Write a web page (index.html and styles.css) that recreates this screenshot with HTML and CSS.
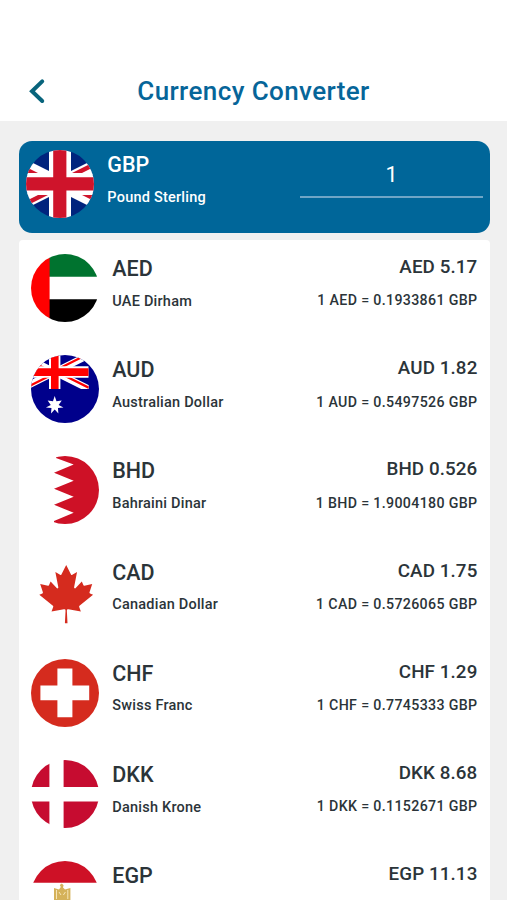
FILE: index.html
```html
<!DOCTYPE html>
<html lang="en">
<head>
  <meta charset="UTF-8">
  <meta name="viewport" content="width=device-width, initial-scale=1.0">
  <title>Currency Converter</title>
  <link rel="stylesheet" href="styles.css">
</head>
<body>
  <header class="header">
    <svg class="back" viewBox="0 0 18 26"><path d="M14.2 3.4 4 13.2 14.2 23" /></svg>
    <h1>Currency Converter</h1>
  </header>

  <main class="content">
    <section class="base">
      <svg class="flag" viewBox="0 0 68 68">
        <clipPath id="circle"><circle cx="34" cy="34" r="34" /></clipPath>
        <g clip-path="url(#circle)">
          <path fill="#00247d" d="M0 0h68v68H0z" />
          <path stroke="#fff" stroke-width="13.6" d="M-34 0 102 68M-34 68 102 0" />
          <path stroke="#cf142b" stroke-width="4.4" d="M-34 2.5 34 36.5M34 31.5l68 34M-34 70.5l68-34M34 31.5l68-34" />
          <path fill="#fff" d="M23 0h22v68H23zM0 23h68v22H0z" />
          <path fill="#cf142b" d="M27.2 0h13.2v68H27.2zM0 27.2h68v13.4H0z" />
        </g>
      </svg>
      <div class="name">
        <h2>GBP</h2>
        <p>Pound Sterling</p>
      </div>
      <div class="amount">1</div>
    </section>

    <section class="list">
      <div class="row">
        <svg class="flag" viewBox="0 0 68 68">
          <g clip-path="url(#circle)">
            <path fill="#00732f" d="M18 0h50v22.7H18z" />
            <path d="M18 45.3h50V68H18z" />
            <path fill="#f00" d="M0 0h18.6v68H0z" />
          </g>
        </svg>
        <div class="name">
          <h2>AED</h2>
          <p>UAE Dirham</p>
        </div>
        <div class="rate">
          <h2>AED 5.17</h2>
          <p>1 AED = 0.1933861 GBP</p>
        </div>
      </div>

      <div class="row">
        <svg class="flag" viewBox="0 0 68 68">
          <clipPath id="canton"><path d="M0 0h57.7v34H0z" /></clipPath>
          <g clip-path="url(#circle)">
            <path fill="#00008b" d="M0 0h68v68H0z" />
            <g clip-path="url(#canton)">
              <path stroke="#fff" stroke-width="6.8" d="M-10.3 0l68 34M-10.3 34l68-34" />
              <path stroke="#f00" stroke-width="2.2" d="M-10.3 1.3l34 17M23.7 15.7l34 17M-10.3 35.3l34-17M23.7 15.7l34-17" />
              <path fill="#fff" d="M18 0h11.4v34H18zM0 11.3h57.7v11.4H0z" />
              <path fill="#f00" d="M20 0h7.6v34H20zM0 13.2h57.7v7.8H0z" />
            </g>
            <path fill="#fff" d="M23.7 41l1.75 5.37 5.29-.98-3.11 4.61 4.84 2.51-5.54.45.46 5.54-3.69-4.1-3.69 4.1.46-5.54-5.54-.45 4.84-2.51-3.11-4.61 5.29.98z" />
          </g>
        </svg>
        <div class="name">
          <h2>AUD</h2>
          <p>Australian Dollar</p>
        </div>
        <div class="rate">
          <h2>AUD 1.82</h2>
          <p>1 AUD = 0.5497526 GBP</p>
        </div>
      </div>

      <div class="row">
        <svg class="flag" viewBox="0 0 68 68">
          <path clip-path="url(#circle)" fill="#ce1126" d="M68 0H25v2l17.7 6.6L23 16.8l19.7 8L23 32.8l19.7 8L23 48.8l19.7 8L23 65v3h45z" />
        </svg>
        <div class="name">
          <h2>BHD</h2>
          <p>Bahraini Dinar</p>
        </div>
        <div class="rate">
          <h2>BHD 0.526</h2>
          <p>1 BHD = 1.9004180 GBP</p>
        </div>
      </div>

      <div class="row">
        <svg class="flag" viewBox="0 0 68 68">
          <path fill="#d52b1e" transform="translate(35.2 35.9) scale(.01445)" d="m-90 2030 45-863a95 95 0 0 0-111-98l-859 151 116-320a65 65 0 0 0-20-73l-941-762 212-99a65 65 0 0 0 34-79l-186-572 542 115a65 65 0 0 0 73-38l105-247 423 454a65 65 0 0 0 111-57l-204-1052 327 189a65 65 0 0 0 91-27l332-652 332 652a65 65 0 0 0 91 27l327-189-204 1052a65 65 0 0 0 111 57l423-454 105 247a65 65 0 0 0 73 38l542-115-186 572a65 65 0 0 0 34 79l212 99-941 762a65 65 0 0 0-20 73l116 320-859-151a95 95 0 0 0-111 98l45 863z" />
        </svg>
        <div class="name">
          <h2>CAD</h2>
          <p>Canadian Dollar</p>
        </div>
        <div class="rate">
          <h2>CAD 1.75</h2>
          <p>1 CAD = 0.5726065 GBP</p>
        </div>
      </div>

      <div class="row">
        <svg class="flag" viewBox="0 0 68 68">
          <circle cx="34" cy="34" r="34" fill="#d52b1e" />
          <path fill="#fff" d="M26.4 9.4h15v17h16.8v14.8H41.4v17h-15v-17H9.4V26.4h17z" />
        </svg>
        <div class="name">
          <h2>CHF</h2>
          <p>Swiss Franc</p>
        </div>
        <div class="rate">
          <h2>CHF 1.29</h2>
          <p>1 CHF = 0.7745333 GBP</p>
        </div>
      </div>

      <div class="row">
        <svg class="flag" viewBox="0 0 68 68">
          <path clip-path="url(#circle)" fill="#c60c30" d="M0 0h18.4v27H0zM32.6 0H68v27H32.6zM0 41.4h18.4V68H0zM32.6 41.4H68V68H32.6z" />
        </svg>
        <div class="name">
          <h2>DKK</h2>
          <p>Danish Krone</p>
        </div>
        <div class="rate">
          <h2>DKK 8.68</h2>
          <p>1 DKK = 0.1152671 GBP</p>
        </div>
      </div>

      <div class="row">
        <svg class="flag" viewBox="0 0 68 68">
          <g clip-path="url(#circle)">
            <path fill="#ce1126" d="M0 0h68v21.8H0z" />
            <path d="M0 46h68v22H0z" />
          </g>
          <path fill="#d5b25a" d="M23 27l5 1.5 1.8-2.5-1-2 2-1.4 1.8 1.6-.6 2.2 2 2.1 5.4-1.5v15H23z" />
          <path fill="none" stroke="#fff3cf" stroke-width=".8" d="M25.5 29v9M36.8 29v9M28 31l2 3M34.4 31l-2 3" />
        </svg>
        <div class="name">
          <h2>EGP</h2>
        </div>
        <div class="rate">
          <h2>EGP 11.13</h2>
        </div>
      </div>
    </section>
  </main>
</body>
</html>
```

FILE: styles.css
```css
* {
  box-sizing: border-box;
}
body {
  margin: 0;
  height: 900px;
  overflow: hidden;
  background: #f0f0f0;
  color: #2b3439;
  font-family: Roboto, "Liberation Sans", sans-serif;
  font-weight: 500;
}
h1, h2, p {
  margin: 0;
  font-weight: 500;
  white-space: nowrap;
}
.header {
  display: grid;
  grid-template-columns: 74px 1fr 74px;
  align-items: center;
  height: 121px;
  padding-top: 61px;
  background: #fff;
}
.header h1 {
  color: #066599;
  font-size: 26px;
  line-height: 30px;
  letter-spacing: 0.4px;
  text-align: center;
}
.back {
  width: 18px;
  height: 26px;
  margin-left: 28px;
  fill: none;
  stroke: #08647c;
  stroke-width: 4;
  stroke-linecap: round;
}
.content {
  height: 779px;
  padding: 20px 17px 0 19px;
  overflow: hidden;
}
.flag {
  flex: none;
  width: 68px;
  height: 68px;
}
.base {
  display: flex;
  height: 92px;
  padding: 9px 7px;
  border-radius: 13px;
  background: #006699;
  color: #fff;
}
.name {
  flex: 1;
  padding-left: 13.3px;
}
.name h2 {
  font-size: 21.5px;
  line-height: 29px;
}
.name p {
  margin-top: 8.6px;
  font-size: 14.5px;
  line-height: 20px;
  letter-spacing: 0.22px;
}
.amount {
  width: 183px;
  height: 48px;
  padding-top: 11px;
  border-bottom: 2px solid #6fa5c6;
  font-size: 21.5px;
  font-weight: 400;
  line-height: 28px;
  text-align: center;
}
.list {
  margin-top: 7px;
  padding: 14px 12.6px 0 12px;
  border-radius: 4px;
  background: #fff;
}
.row {
  display: flex;
  height: 101.2px;
}
.rate {
  text-align: right;
}
.rate h2 {
  font-size: 18.8px;
  line-height: 26px;
  letter-spacing: 0.1px;
}
.rate p {
  margin-top: 10.4px;
  font-size: 14.2px;
  line-height: 20px;
  letter-spacing: 0.34px;
}
```
